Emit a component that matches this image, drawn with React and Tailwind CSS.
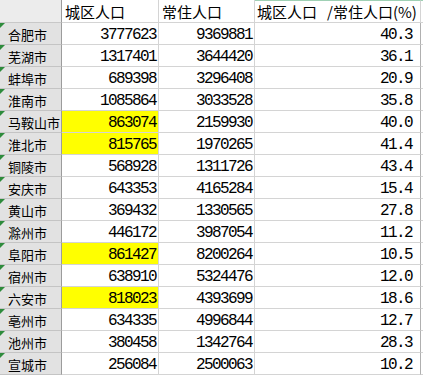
import React from "react";

const rows = [
  ["合肥市", "3777623", "9369881", "40.3", false],
  ["芜湖市", "1317401", "3644420", "36.1", false],
  ["蚌埠市", "689398", "3296408", "20.9", false],
  ["淮南市", "1085864", "3033528", "35.8", false],
  ["马鞍山市", "863074", "2159930", "40.0", true],
  ["淮北市", "815765", "1970265", "41.4", true],
  ["铜陵市", "568928", "1311726", "43.4", false],
  ["安庆市", "643353", "4165284", "15.4", false],
  ["黄山市", "369432", "1330565", "27.8", false],
  ["滁州市", "446172", "3987054", "11.2", false],
  ["阜阳市", "861427", "8200264", "10.5", true],
  ["宿州市", "638910", "5324476", "12.0", false],
  ["六安市", "818023", "4393699", "18.6", true],
  ["亳州市", "634335", "4996844", "12.7", false],
  ["池州市", "380458", "1342764", "28.3", false],
  ["宣城市", "256084", "2500063", "10.2", false],
];

const cjk = "font-['Noto_Sans_CJK_SC',sans-serif]";
const mono = "font-['Liberation_Mono','Noto_Sans_CJK_SC',monospace]";

export default function App() {
  return (
    <div className="w-[423px] h-[376px] overflow-hidden bg-white text-black">
      <div className="grid grid-cols-[62px_97px_96px_166px_2px] grid-rows-[23px_repeat(16,22px)]">
        {/* header */}
        <div className="bg-[#ececec] border-r border-r-[#9c9c9c] border-b border-b-[#c8c8c8]" />
        <div className={`${cjk} text-[15px] leading-none flex items-center pl-[3px] border-r border-b border-[#d4d4d4]`}>城区人口</div>
        <div className={`${cjk} text-[15px] leading-none flex items-center pl-[3px] border-r border-b border-[#d4d4d4]`}>常住人口</div>
        <div className={`${cjk} text-[15px] leading-none flex items-center pl-[2px] whitespace-nowrap border-t border-t-[#9fd0b4] border-r border-b border-[#d4d4d4]`}>
          <span>城区人口</span>
          <span className="ml-[10px]">/常住人口(%)</span>
        </div>
        <div className="border-b border-[#d4d4d4] border-t border-t-[#9fd0b4]" />

        {rows.map(([city, a, b, r, hl]) => (
          <React.Fragment key={city}>
            <div className={`${cjk} relative text-[13px] leading-none flex items-end pb-[3px] pl-[8px] whitespace-nowrap bg-[#e2e2e2] border-r border-r-[#9c9c9c] border-b border-b-[#c4c4c4]`}>
              <span className="absolute left-0 top-0 w-0 h-0 border-t-[5px] border-t-[#2e8b3c] border-r-[5px] border-r-transparent" />
              {city}
            </div>
            <div className={`${mono} text-[16px] leading-none tracking-[-1.6px] flex items-end justify-end pb-[1px] pr-[2px] border-r border-b border-[#d4d4d4] ${hl ? "bg-[#ffff00]" : ""}`}>
              {a}
            </div>
            <div className={`${mono} text-[16px] leading-none tracking-[-1.6px] flex items-end justify-end pb-[1px] pr-[2px] border-r border-b border-[#d4d4d4]`}>
              {b}
            </div>
            <div className={`${mono} text-[16px] leading-none tracking-[-1.6px] flex items-end justify-end pb-[1px] pr-[8px] border-r border-r-[#b0b0b0] border-b border-[#d4d4d4]`}>
              {r}
            </div>
            <div className="border-b border-[#d4d4d4]" />
          </React.Fragment>
        ))}
      </div>
    </div>
  );
}
